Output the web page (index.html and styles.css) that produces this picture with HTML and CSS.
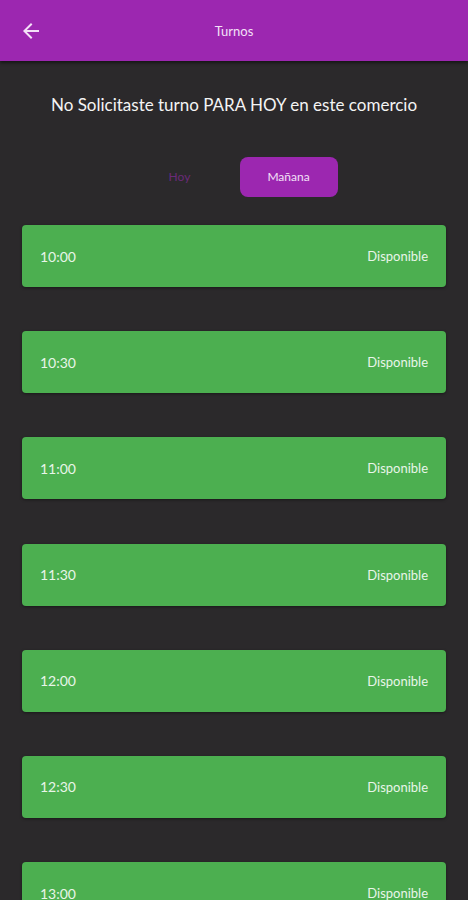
FILE: index.html
```html
<!DOCTYPE html>
<html lang="es">
<head>
    <meta charset="UTF-8">
    <meta name="viewport" content="width=device-width, initial-scale=1.0">
    <title>Turnos</title>
    <link rel="stylesheet" href="styles.css">
</head>
<body>
    <div class="header">
        <svg class="back" width="24" height="24" viewBox="0 0 24 24">
            <path d="M20 11H7.83l5.59-5.59L12 4l-8 8 8 8 1.41-1.41L7.83 13H20v-2z" fill="#f3e0f7"/>
        </svg>
        <div class="title">Turnos</div>
    </div>

    <div class="content">
        <h1>No Solicitaste turno PARA HOY en este comercio</h1>

        <div class="tabs">
            <div class="tab">Hoy</div>
            <div class="tab active">Mañana</div>
        </div>

        <div class="slots">
            <div class="slot"><span>10:00</span><span class="status">Disponible</span></div>
            <div class="slot"><span>10:30</span><span class="status">Disponible</span></div>
            <div class="slot"><span>11:00</span><span class="status">Disponible</span></div>
            <div class="slot"><span>11:30</span><span class="status">Disponible</span></div>
            <div class="slot"><span>12:00</span><span class="status">Disponible</span></div>
            <div class="slot"><span>12:30</span><span class="status">Disponible</span></div>
            <div class="slot"><span>13:00</span><span class="status">Disponible</span></div>
        </div>
    </div>
</body>
</html>
```

FILE: styles.css
```css
body {
    font-family: Lato, "Open Sans", sans-serif;
    margin: 0;
    background-color: #2b292b;
    color: #fff;
    height: 900px;
    overflow: hidden;
}

.header {
    height: 61px;
    background-color: #9c27b0;
    display: flex;
    align-items: center;
    position: relative;
    box-shadow: 0 2px 3px rgba(0, 0, 0, 0.5);
}

.back {
    margin-left: 19px;
}

.title {
    position: absolute;
    left: 0;
    right: 0;
    text-align: center;
    font-size: 13px;
    color: #f3e0f7;
    pointer-events: none;
}

.content {
    padding: 0 22px;
}

h1 {
    font-size: 17px;
    font-weight: normal;
    text-align: center;
    margin: 34px 0 0;
    line-height: 20px;
    color: #f4f4f4;
}

.tabs {
    display: flex;
    justify-content: center;
    margin-top: 42px;
    gap: 11px;
}

.tab {
    width: 98px;
    height: 40px;
    line-height: 40px;
    text-align: center;
    font-size: 12px;
    border-radius: 8px;
    color: #6a2a78;
}

.tab.active {
    background-color: #9c27b0;
    color: #f3e0f7;
}

.slots {
    margin-top: 28px;
    display: flex;
    flex-direction: column;
    gap: 44.2px;
}

.slot {
    height: 62px;
    background-color: #4caf50;
    border-radius: 4px;
    display: flex;
    align-items: center;
    justify-content: space-between;
    padding: 0 18px;
    font-size: 14px;
    color: #e8f5e9;
    box-shadow: 0 1px 3px rgba(0, 0, 0, 0.4);
}

.status {
    font-size: 13px;
}
```
